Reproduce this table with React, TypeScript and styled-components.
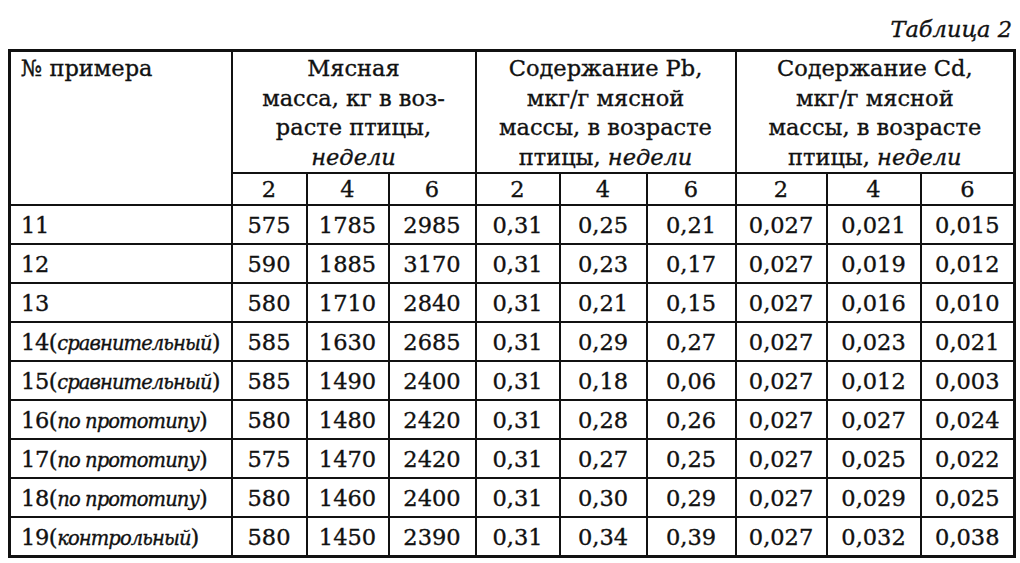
import styled, { createGlobalStyle } from "styled-components";

const GlobalStyle = createGlobalStyle`
  html, body {
    margin: 0;
    padding: 0;
    background: #ffffff;
  }
  body {
    font-family: "DejaVu Serif", "Liberation Serif", serif;
    color: #111;
    -webkit-text-stroke: 0.35px #111;
  }
`;

const Page = styled.div`
  width: 1020px;
  height: 563px;
  padding: 14px 7px 0 8px;
  box-sizing: border-box;
`;

const Caption = styled.div`
  font-style: italic;
  font-size: 22.5px;
  text-align: right;
  height: 35px;
  line-height: 30px;
  padding-right: 1px;
`;

const Table = styled.table`
  width: 1005px;
  border-collapse: collapse;
  table-layout: fixed;
  border: 3px solid #111;
`;

const HeadCell = styled.th<{ $left?: boolean }>`
  border: 2px solid #111;
  font-weight: normal;
  font-size: 22.5px;
  line-height: 29.5px;
  height: 118px;
  vertical-align: top;
  text-align: ${(p) => (p.$left ? "left" : "center")};
  padding: ${(p) => (p.$left ? "2px 10px 0" : "2px 4px 0")};
`;

const SubCell = styled.th`
  border: 2px solid #111;
  font-weight: normal;
  font-size: 22.5px;
  height: 30px;
  padding: 0;
  text-align: center;
  line-height: 28px;
`;

const LabelCell = styled.td`
  border: 2px solid #111;
  font-size: 22.5px;
  height: 37px;
  padding: 0 0 0 10px;
  white-space: nowrap;
  letter-spacing: -0.4px;
`;

const NumCell = styled.td`
  border: 2px solid #111;
  font-size: 22.5px;
  height: 37px;
  padding: 0;
  text-align: center;
  white-space: nowrap;
`;

const Note = styled.span`
  font-style: italic;
  font-size: 19.5px;
  letter-spacing: -0.9px;
`;

const Em = styled.i`
  font-style: italic;
`;

const widths = [222, 75, 82, 87, 84, 87, 89, 91, 94, 94];

type Row = { n: string; note?: string; vals: string[] };

const rows: Row[] = [
  { n: "11", vals: ["575", "1785", "2985", "0,31", "0,25", "0,21", "0,027", "0,021", "0,015"] },
  { n: "12", vals: ["590", "1885", "3170", "0,31", "0,23", "0,17", "0,027", "0,019", "0,012"] },
  { n: "13", vals: ["580", "1710", "2840", "0,31", "0,21", "0,15", "0,027", "0,016", "0,010"] },
  { n: "14", note: "сравнительный", vals: ["585", "1630", "2685", "0,31", "0,29", "0,27", "0,027", "0,023", "0,021"] },
  { n: "15", note: "сравнительный", vals: ["585", "1490", "2400", "0,31", "0,18", "0,06", "0,027", "0,012", "0,003"] },
  { n: "16", note: "по прототипу", vals: ["580", "1480", "2420", "0,31", "0,28", "0,26", "0,027", "0,027", "0,024"] },
  { n: "17", note: "по прототипу", vals: ["575", "1470", "2420", "0,31", "0,27", "0,25", "0,027", "0,025", "0,022"] },
  { n: "18", note: "по прототипу", vals: ["580", "1460", "2400", "0,31", "0,30", "0,29", "0,027", "0,029", "0,025"] },
  { n: "19", note: "контрольный", vals: ["580", "1450", "2390", "0,31", "0,34", "0,39", "0,027", "0,032", "0,038"] },
];

const weeks = ["2", "4", "6"];

export default function App() {
  return (
    <>
      <GlobalStyle />
      <Page>
        <Caption>Таблица 2</Caption>
        <Table>
          <colgroup>
            {widths.map((w, i) => (
              <col key={i} style={{ width: w }} />
            ))}
          </colgroup>
          <thead>
            <tr>
              <HeadCell $left rowSpan={2}>№ примера</HeadCell>
              <HeadCell colSpan={3}>
                Мясная
                <br />
                масса, кг в воз-
                <br />
                расте птицы,
                <br />
                <Em>недели</Em>
              </HeadCell>
              <HeadCell colSpan={3}>
                Содержание Pb,
                <br />
                мкг/г мясной
                <br />
                массы, в возрасте
                <br />
                птицы, <Em>недели</Em>
              </HeadCell>
              <HeadCell colSpan={3}>
                Содержание Cd,
                <br />
                мкг/г мясной
                <br />
                массы, в возрасте
                <br />
                птицы, <Em>недели</Em>
              </HeadCell>
            </tr>
            <tr>
              {[0, 1, 2].map((g) =>
                weeks.map((w) => <SubCell key={g + w}>{w}</SubCell>)
              )}
            </tr>
          </thead>
          <tbody>
            {rows.map((r) => (
              <tr key={r.n}>
                <LabelCell>
                  {r.n}
                  {r.note && (
                    <>
                      (<Note>{r.note}</Note>)
                    </>
                  )}
                </LabelCell>
                {r.vals.map((v, i) => (
                  <NumCell key={i}>{v}</NumCell>
                ))}
              </tr>
            ))}
          </tbody>
        </Table>
      </Page>
    </>
  );
}
